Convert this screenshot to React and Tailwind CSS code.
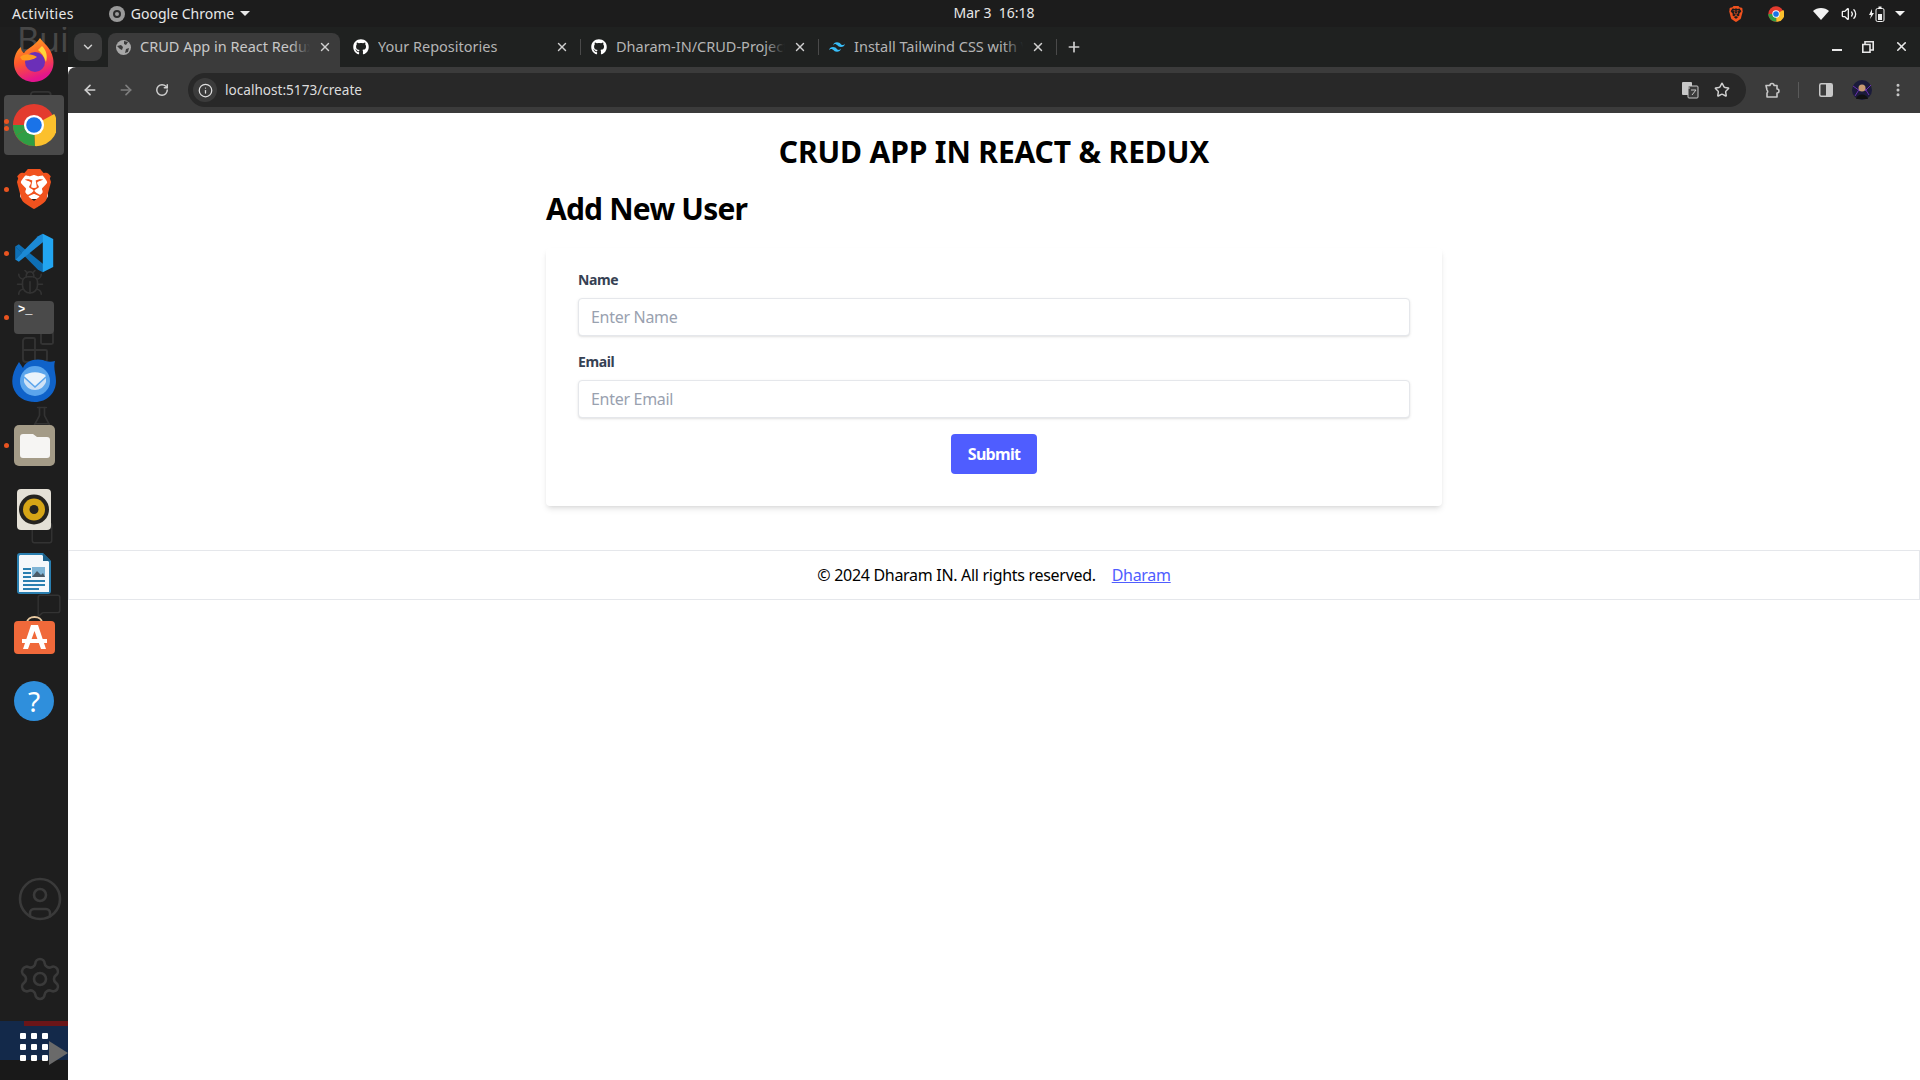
import React from "react";
import { FaGithub } from "react-icons/fa";
import { SiTailwindcss, SiBrave } from "react-icons/si";
import {
  ArrowLeft,
  ArrowRight,
  RotateCw,
  Info,
  Star,
  MoreVertical,
  ChevronDown,
  X,
  Plus,
  CircleUser,
  Settings,
  Volume2,
  Bug,
  Blocks,
  Copy,
  FlaskConical,
  MessageSquare,
  Square,
} from "lucide-react";

const FONT = "[font-family:'Noto_Sans',sans-serif]";

function ChromeLogo({ size = 44 }) {
  return (
    <svg width={size} height={size} viewBox="0 0 48 48">
      <circle cx="24" cy="24" r="23" fill="#e33b2e" />
      <path d="M24 24 L46 12 A23 23 0 0 1 25 47 Z" fill="#fbc02d" />
      <path d="M24 24 L25 47 A23 23 0 0 1 4 35.5 Z" fill="#2f9e44" />
      <path d="M24 24 L4 35.5 A23 23 0 0 1 1 24 Z" fill="#2f9e44" />
      <circle cx="24" cy="24" r="11" fill="#fff" />
      <circle cx="24" cy="24" r="8.5" fill="#1a73e8" />
    </svg>
  );
}

function FirefoxLogo() {
  return (
    <svg width="42" height="44" viewBox="0 0 42 44" className="-mt-[2px]">
      <defs>
        <linearGradient id="ff" x1="0" y1="0" x2="0.3" y2="1">
          <stop offset="0" stopColor="#ffb11f" />
          <stop offset="0.55" stopColor="#ff5a2c" />
          <stop offset="1" stopColor="#e3148e" />
        </linearGradient>
      </defs>
      <path d="M27 0 C30 5 38 9 40 20 C43 34 32 44 21 44 C9 44 1 35 1 25 C1 18 4 12 8 9 C8 12 9 14 11 15 C14 10 22 8 27 0 Z" fill="url(#ff)" />
      <circle cx="22" cy="24" r="10" fill="#6b2fb8" />
      <path d="M7 19 C12 15 19 16 24 19 C20 22 14 23 9 22 Z" fill="#ff9a1f" />
      <path d="M29 8 C33 12 35 17 33 24 C31 18 28 14 25 12 Z" fill="#ffd53a" />
    </svg>
  );
}

function VsCodeLogo() {
  return (
    <svg width="40" height="40" viewBox="0 0 100 100">
      <path d="M3 34 L12 28 L76 80 L72 98 L60 92 Z" fill="#0e6fb5" />
      <path d="M3 66 L12 72 L76 20 L72 2 L60 8 Z" fill="#1c8ad6" />
      <path d="M72 2 L98 15 V85 L72 98 Z" fill="#22a5f1" />
      <path d="M3 34 L3 66 L20 50 Z" fill="#0e6fb5" />
    </svg>
  );
}

function ThunderbirdLogo() {
  return (
    <svg width="46" height="44" viewBox="0 0 46 44">
      <path d="M8 3 C2 12 0 20 2 28 C5 38 14 43 24 43 C36 43 45 34 45 22 C45 15 42 9 44 2 C40 3 36 3 32 1 C24 -1 14 2 12 9 Z" fill="#0f62c9" />
      <circle cx="24" cy="22" r="15" fill="#5ba5ec" />
      <path d="M13 17 C18 12 30 12 35 17 L24 27 Z" fill="#eaf3fb" />
      <path d="M13 19 L24 29 L35 19 V23 C33 28 29 31 24 31 C19 31 15 28 13 23 Z" fill="#cfe2f6" />
    </svg>
  );
}

function FilesLogo() {
  return (
    <svg width="41" height="41" viewBox="0 0 41 41">
      <rect width="41" height="41" rx="5" fill="#a49b87" />
      <path d="M6 12 a3 3 0 0 1 3-3 H19 L23 12 H33 a3 3 0 0 1 3 3 V30 a3 3 0 0 1-3 3 H9 a3 3 0 0 1-3-3 Z" fill="#f6f5f3" />
    </svg>
  );
}

function RhythmboxLogo() {
  return (
    <svg width="34" height="41" viewBox="0 0 34 41">
      <rect width="34" height="41" rx="4" fill="#e4e0d6" />
      <circle cx="17" cy="20.5" r="15" fill="#25231f" />
      <circle cx="17" cy="20.5" r="11" fill="#d6a516" />
      <circle cx="17" cy="20.5" r="4.5" fill="#25231f" />
    </svg>
  );
}

function WriterLogo() {
  return (
    <svg width="34" height="41" viewBox="0 0 34 41">
      <path d="M3 0 H26 L34 8 V38 a3 3 0 0 1-3 3 H3 a3 3 0 0 1-3-3 V3 a3 3 0 0 1 3-3 Z" fill="#2a7fb0" />
      <path d="M3 2 H25 L32 9 V39 H2 V3 Z" fill="#f4f8fb" />
      <path d="M26 0 L34 8 H26 Z" fill="#1b5f88" />
      <rect x="6" y="15" width="8" height="2" fill="#2a7fb0" />
      <rect x="6" y="19" width="8" height="2" fill="#2a7fb0" />
      <rect x="6" y="23" width="8" height="2" fill="#2a7fb0" />
      <rect x="15" y="14" width="13" height="10" fill="#7fb5d6" />
      <path d="M15 24 L20 18 L24 22 L26 20 L28 24 Z" fill="#4a5b68" />
      <rect x="6" y="27" width="22" height="2" fill="#2a7fb0" />
      <rect x="6" y="31" width="22" height="2" fill="#2a7fb0" />
      <rect x="6" y="35" width="16" height="2" fill="#2a7fb0" />
    </svg>
  );
}

function SoftwareLogo() {
  return (
    <svg width="41" height="39" viewBox="0 0 41 39" className="mb-[6px]">
      <path d="M13 8 C13 0 28 0 28 8" fill="none" stroke="#e8c9a0" strokeWidth="2" />
      <rect y="6" width="41" height="33" rx="4" fill="#f0693a" />
      <path d="M17 10 H24 L32 34 H27 L20.5 16 L14 34 H9 Z" fill="#fff" />
      <rect x="8" y="24" width="25" height="4" fill="#fff" />
    </svg>
  );
}

function HelpLogo() {
  return (
    <div className="flex h-10 w-10 items-center justify-center rounded-full bg-[#2f8fdc] text-[28px] text-white">?</div>
  );
}

function TerminalLogo() {
  return (
    <div className="h-[33px] w-10 rounded bg-[#4a4a4a] pl-1 pt-[2px] font-['Liberation_Mono',monospace] text-[12px] font-bold leading-[14px] text-white">
      {">_"}
    </div>
  );
}

function BraveLogo() {
  return (
    <div className="relative flex h-11 w-10 items-center justify-center">
      <div className="absolute left-[6px] top-[6px] h-[26px] w-7 rounded bg-white" />
      <SiBrave size={44} color="#f1521e" className="relative" />
    </div>
  );
}

function DockItem({ active, dots = 0, children }) {
  return (
    <div className="relative flex h-16 items-center justify-center">
      {active && <div className="absolute left-1 top-[2px] h-[60px] w-[60px] rounded bg-[#4a4a4a]" />}
      {dots > 0 && (
        <div className="absolute left-1 flex flex-col gap-[2px]">
          {dots === 2 && <span className="h-[5px] w-[5px] rounded-full bg-[#e95420]" />}
          <span className="h-[5px] w-[5px] rounded-full bg-[#e95420]" />
        </div>
      )}
      <div className="relative flex items-center justify-center">{children}</div>
    </div>
  );
}

function Dock() {
  return (
    <aside className="relative flex w-[68px] shrink-0 flex-col overflow-hidden bg-[#1e1e1e]">
      {/* faint window showing through the dock */}
      <div className="absolute left-[17px] top-[-13px] whitespace-nowrap text-[34px] text-[#474747]">Build</div>
      <Copy size={34} strokeWidth={1.3} className="absolute left-7 top-[62px] text-[#333333]" />
      <Bug size={30} strokeWidth={1.3} className="absolute left-[15px] top-[241px] text-[#333333]" />
      <Blocks size={36} strokeWidth={1.3} className="absolute left-[20px] top-[302px] text-[#333333]" />
      <FlaskConical size={30} strokeWidth={1.3} className="absolute left-[27px] top-[378px] text-[#333333]" />
      <Square size={26} strokeWidth={1.3} className="absolute left-[29px] top-[493px] text-[#333333]" />
      <MessageSquare size={26} strokeWidth={1.3} className="absolute left-[36px] top-[565px] text-[#333333]" />
      <CircleUser size={48} strokeWidth={1.3} className="absolute left-4 top-[848px] text-[#3a3a3a]" />
      <Settings size={48} strokeWidth={1.3} className="absolute left-4 top-[928px] text-[#3a3a3a]" />

      <div className="relative flex-1 pt-[2px]">
        <DockItem><FirefoxLogo /></DockItem>
        <DockItem active dots={2}><ChromeLogo /></DockItem>
        <DockItem dots={1}><BraveLogo /></DockItem>
        <DockItem dots={1}><VsCodeLogo /></DockItem>
        <DockItem dots={1}><TerminalLogo /></DockItem>
        <DockItem><ThunderbirdLogo /></DockItem>
        <DockItem dots={1}><FilesLogo /></DockItem>
        <DockItem><RhythmboxLogo /></DockItem>
        <DockItem><WriterLogo /></DockItem>
        <DockItem><SoftwareLogo /></DockItem>
        <DockItem><HelpLogo /></DockItem>
      </div>
      <div className="relative h-[39px] bg-[#13294a]">
        <div className="absolute left-6 right-0 top-0 h-[5px] bg-[#6b1518]" />
        <div className="absolute left-5 top-[12px] grid grid-cols-3 gap-x-[5px] gap-y-[5px]">
          {Array.from({ length: 9 }).map((_, i) => (
            <span key={i} className="h-[6px] w-[6px] rounded-[1px] bg-white" />
          ))}
        </div>
        <div className="absolute left-[49px] top-[20px] h-0 w-0 border-y-[12px] border-l-[19px] border-y-transparent border-l-[#6a6a6a]" />
      </div>
      <div className="h-5 bg-[#191919]" />
    </aside>
  );
}

function GlobeFilled() {
  return (
    <svg width="15" height="15" viewBox="0 0 15 15">
      <circle cx="7.5" cy="7.5" r="7.5" fill="#a8a8a8" />
      <path d="M1 6 L5 5 L7 7 L6 10 L4 9 Z M8 1 L12 2 L10 5 L8 4 Z M10 9 L13 8 L12 12 L9 13 Z" fill="#3b3b3b" />
    </svg>
  );
}

function Tab({ icon, title, active, w = 237 }) {
  return (
    <div className={`relative flex h-[34px] shrink-0 items-center pb-[6px] ${active ? "rounded-t-lg bg-[#3b3b3b] pl-2 pr-[8px]" : "pl-[10px] pr-[11px]"}`} style={{ width: w }}>
      <span className={`flex shrink-0 items-center ${active ? "w-[24px]" : "w-[25px]"}`}>{icon}</span>
      <div className={`relative min-w-0 flex-1 overflow-hidden whitespace-nowrap text-[14.5px] ${active ? "text-[#c8c8c8]" : "text-[#b4b4b4]"}`}>
        {title}
        <div className={`absolute inset-y-0 right-0 w-5 bg-linear-to-r from-transparent ${active ? "to-[#3b3b3b]" : "to-[#1f2120]"}`} />
      </div>
      <X size={14} strokeWidth={2.5} className="ml-[8px] shrink-0 text-[#d0d0d0]" />
    </div>
  );
}

function TopBar() {
  return (
    <header className={`relative flex h-[27px] shrink-0 items-center bg-[#1c1c1c] text-[14px] text-[#e8e8e8] ${FONT}`}>
      <span className="ml-3 tracking-[0.35px]">Activities</span>
      <div className="ml-[35px] flex h-4 w-4 items-center justify-center rounded-full bg-[#9a9a9a]">
        <div className="h-2 w-2 rounded-full border-2 border-[#2a2a2a]" />
      </div>
      <span className="ml-[6px]">Google Chrome</span>
      <span className="ml-[6px] h-0 w-0 border-x-[5px] border-t-[5px] border-x-transparent border-t-[#e8e8e8]" />
      <span className="absolute left-[994px] top-[4px] -translate-x-1/2 whitespace-pre leading-[18px]">{"Mar 3  16:18"}</span>
      <div className="ml-auto flex items-center">
        <SiBrave size={16} color="#f1521e" />
        <span className="ml-6"><ChromeLogo size={16} /></span>
        <svg className="ml-[29px]" width="16" height="12" viewBox="0 0 16 12"><path d="M0 3 C4 -1 12 -1 16 3 L8 12 Z" fill="#f2f2f2" /></svg>
        <Volume2 size={16} className="ml-[12px] text-[#f2f2f2]" />
        <svg className="ml-[12px]" width="16" height="16" viewBox="0 0 16 16">
          <path d="M3 3 L0 9 H2 L1 13 L5 7 H3 Z" fill="#f2f2f2" />
          <rect x="7" y="2.5" width="8" height="13" rx="1.5" fill="none" stroke="#f2f2f2" />
          <rect x="9" y="8" width="4" height="6" fill="#f2f2f2" />
          <rect x="9.5" y="0.5" width="3" height="2" fill="#f2f2f2" />
        </svg>
        <span className="ml-[10px] mr-[15px] h-0 w-0 border-x-[5px] border-t-[5px] border-x-transparent border-t-[#f2f2f2]" />
      </div>
    </header>
  );
}

function Avatar() {
  return (
    <svg width="20" height="20" viewBox="0 0 20 20">
      <circle cx="10" cy="10" r="10" fill="#1b1b3a" />
      <path d="M1 6 L8 11 M19 5 L13 11 M3 16 L8 8 M17 15 L12 7" stroke="#6a2fb0" strokeWidth="1" />
      <circle cx="10" cy="8" r="3.5" fill="#c79a72" />
      <path d="M4 19 C5 13 15 13 16 19 Z" fill="#111" />
    </svg>
  );
}

function TabStrip() {
  return (
    <div className={`flex h-10 items-end bg-[#1f2120] ${FONT}`}>
      <div className="mb-[6px] ml-[6px] mr-[6px] flex h-7 w-7 items-center justify-center rounded-lg bg-[#3b3b3b]">
        <ChevronDown size={14} strokeWidth={2.5} className="text-[#d0d0d0]" />
      </div>
      <Tab active w={232} title="CRUD App in React Redux" icon={<GlobeFilled />} />
      <div className="w-[3px]" />
      <Tab title="Your Repositories" icon={<FaGithub size={16} className="text-white" />} />
      <div className="mb-[12px] h-4 w-px shrink-0 bg-[#4a4a4a]" />
      <Tab title="Dharam-IN/CRUD-Project" icon={<FaGithub size={16} className="text-white" />} />
      <div className="mb-[12px] h-4 w-px shrink-0 bg-[#4a4a4a]" />
      <Tab title="Install Tailwind CSS with Vite" icon={<SiTailwindcss size={16} className="text-[#38bdf8]" />} />
      <div className="mb-[12px] h-4 w-px shrink-0 bg-[#4a4a4a]" />
      <div className="mb-[12px] ml-[9px] flex h-4 items-center">
        <Plus size={16} strokeWidth={2.5} className="text-[#d0d0d0]" />
      </div>
      <div className="mb-[13px] ml-auto flex items-center gap-[20px] pr-[11px] text-[#e8e8e8]">
        <div className="mt-[7px] h-[2px] w-[10px] bg-[#e8e8e8]" />
        <svg width="12" height="12" viewBox="0 0 12 12">
          <path d="M3 0.8 H11.2 V9 H8 V3.5 H3 Z M0.8 3.5 H8 V11.2 H0.8 Z" fill="none" stroke="#e8e8e8" strokeWidth="1.6" />
        </svg>
        <X size={15} strokeWidth={2.5} />
      </div>
    </div>
  );
}

function Toolbar() {
  return (
    <div className={`flex h-[46px] items-center rounded-tl-lg bg-[#3b3b3b] ${FONT}`}>
      <ArrowLeft size={16} strokeWidth={2.5} className="ml-[14px] text-[#d0d0d0]" />
      <ArrowRight size={16} strokeWidth={2.5} className="ml-5 text-[#7e7e7e]" />
      <RotateCw size={14} strokeWidth={2.5} className="ml-[21px] text-[#d0d0d0]" />
      <div className="ml-[19px] flex h-[34px] w-[1558px] items-center rounded-full bg-[#282828]">
        <div className="ml-[5px] flex h-6 w-6 items-center justify-center rounded-full bg-[#3b3b3b]">
          <Info size={15} strokeWidth={2} className="text-[#e0e0e0]" />
        </div>
        <span className="ml-2 text-[13.6px] text-[#dcdcdc]">localhost:5173/create</span>
        <svg className="ml-auto" width="18" height="18" viewBox="0 0 18 18">
          <rect x="1" y="1" width="10" height="13" rx="1" fill="#c8c8c8" />
          <rect x="7" y="5" width="10" height="12" rx="1" fill="#3b3b3b" stroke="#c8c8c8" />
          <path d="M3 7 H9 M10 9 H15 M11 14 L15 9" stroke="#c8c8c8" strokeWidth="1" />
        </svg>
        <Star size={16} strokeWidth={2.2} className="ml-[15px] mr-[16px] text-[#d0d0d0]" />
      </div>
      <svg className="ml-[18px]" width="17" height="17" viewBox="0 0 17 17">
        <path d="M2 3.5 H6 A2 2 0 0 1 10 3.5 H13 V7 A2 2 0 0 1 13 11 V15 H3 V11 A2 2 0 0 0 3 8 Z" fill="none" stroke="#c8c8c8" strokeWidth="1.6" strokeLinejoin="round" />
      </svg>
      <div className="ml-[17px] h-[16px] w-px bg-[#5a5a5a]" />
      <svg className="ml-5" width="14" height="14" viewBox="0 0 14 14">
        <rect x="0.75" y="0.75" width="12.5" height="12.5" rx="1.5" fill="none" stroke="#c8c8c8" strokeWidth="1.5" />
        <rect x="7" y="1" width="6" height="12" fill="#c8c8c8" />
      </svg>
      <span className="ml-[19px]"><Avatar /></span>
      <MoreVertical size={16} strokeWidth={2.5} className="ml-[18px] text-[#c8c8c8]" />
    </div>
  );
}

function Field({ label, placeholder }) {
  return (
    <div className="mb-4">
      <label className="mb-2 block text-[14px] font-bold leading-5 tracking-[-0.4px] text-gray-700">{label}</label>
      <input
        placeholder={placeholder}
        className="h-[38px] w-full rounded border border-gray-200 bg-white px-3 text-[16px] tracking-[-0.3px] text-gray-700 shadow outline-none placeholder:text-gray-400"
      />
    </div>
  );
}

function CreatePage() {
  return (
    <main className={`flex-1 bg-white ${FONT} text-black`}>
      <h1 className="pt-[21px] text-center text-[30px] font-bold leading-9 tracking-[-0.13px]">CRUD APP IN REACT &amp; REDUX</h1>
      <div className="mx-auto mt-[21px] w-[896px]">
        <h2 className="text-[30px] font-bold leading-9 tracking-[-0.8px]">Add New User</h2>
        <form className="mt-[21px] rounded bg-white px-8 pb-8 pt-[22px] shadow-md">
          <Field label="Name" placeholder="Enter Name" />
          <Field label="Email" placeholder="Enter Email" />
          <div className="flex justify-center">
            <button type="button" className="h-10 w-[86px] rounded bg-[#4f5dff] text-[16px] font-bold tracking-[-0.7px] text-white">Submit</button>
          </div>
        </form>
      </div>
      <footer className="mt-11 flex h-[50px] items-center justify-center border border-gray-200 text-[16px] tracking-[-0.3px]">
        <span>© 2024 Dharam IN. All rights reserved.</span>
        <a href="#" className="ml-4 text-[#4f5dff] underline">Dharam</a>
      </footer>
    </main>
  );
}

export default function App() {
  return (
    <div className={`flex h-screen flex-col overflow-hidden bg-white ${FONT}`}>
      <TopBar />
      <div className="flex min-h-0 flex-1">
        <Dock />
        <div className="flex min-w-0 flex-1 flex-col">
          <TabStrip />
          <Toolbar />
          <CreatePage />
        </div>
      </div>
    </div>
  );
}
